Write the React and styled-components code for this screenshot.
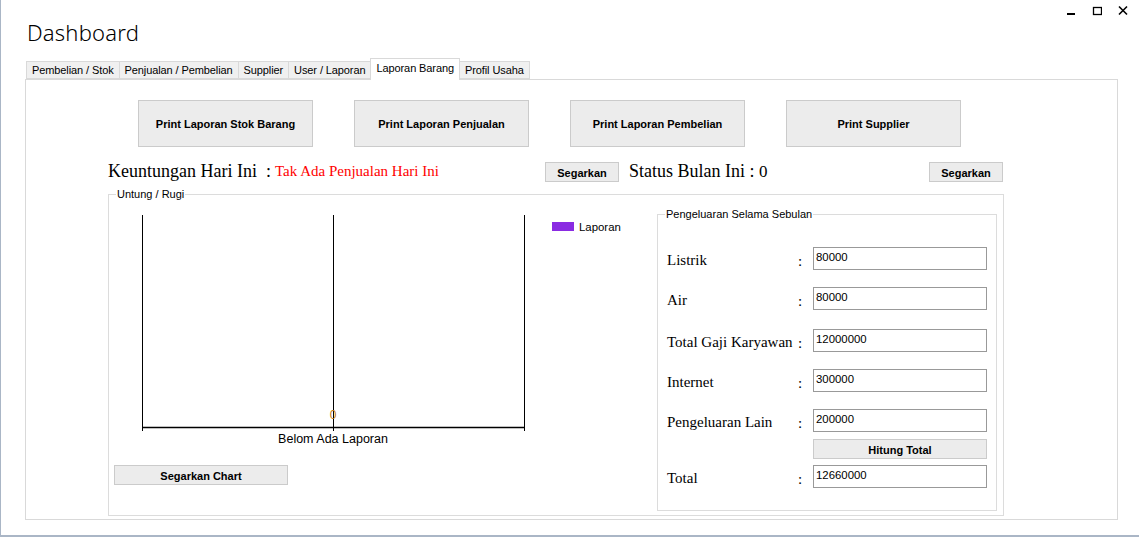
import styled, { createGlobalStyle } from "styled-components"

const Global = createGlobalStyle`
    html, body { margin: 0; padding: 0; background: #fff; }
    * { box-sizing: border-box; }
`

const Window = styled.div`
    width: 1139px;
    height: 537px;
    background: #fff;
    box-shadow: inset 1px 0 #aab6c6, inset 0 -2px #aab6c6;
    overflow: hidden;
    font-family: "Liberation Sans", Arial, sans-serif;
    color: #000;
`
const Header = styled.div`
    display: flex;
    justify-content: space-between;
    height: 58px;
`
const Title = styled.h1`
    margin: 16px 0 0 27px;
    font-family: "Noto Sans", sans-serif;
    font-weight: 300;
    font-size: 22px;
    line-height: 32px;
    letter-spacing: 0.2px;
`
const Controls = styled.div`
    display: flex;
    gap: 16px;
    margin: 5px 11px 0 0;
    height: 12px;
`
const Tabs = styled.div`
    display: flex;
    align-items: flex-end;
    height: 22px;
    margin-left: 27px;
    position: relative;
    z-index: 1;
    margin-bottom: -1px;
`
const Tab = styled.div`
    height: ${p => p.active ? "22px" : "18px"};
    padding: 0 5px;
    margin-bottom: ${p => p.active ? "0" : "1px"};
    background: ${p => p.active ? "#fff" : "#f0f0f0"};
    border: 1px solid #d9d9d9;
    border-bottom: ${p => p.active ? "none" : "1px solid #d9d9d9"};
    margin-left: -1px;
    font-size: 11px;
    letter-spacing: -0.1px;
    line-height: ${p => p.active ? "18px" : "16px"};
    white-space: nowrap;
`
const Panel = styled.div`
    margin-left: 25px;
    width: 1093px;
    height: 441px;
    border: 1px solid #d9d9d9;
    padding-top: 20px;
`
const PrintRow = styled.div`
    display: flex;
    gap: 41px;
    margin-left: 112px;
`
const Button = styled.button`
    width: ${p => p.w || 74}px;
    height: ${p => p.h || 20}px;
    background: #ececec;
    border: 1px solid #cbcbcb;
    font-family: "Liberation Sans", Arial, sans-serif;
    font-weight: bold;
    font-size: 11px;
    padding: 0;
    padding-top: ${p => p.h > 30 ? "0" : "2px"};
    color: #000;
`
const StatusRow = styled.div`
    display: flex;
    align-items: center;
    height: 21px;
    margin-top: 14px;
    margin-left: 82px;
`
const BigLabel = styled.span`
    font-family: "Liberation Serif", "Times New Roman", serif;
    font-size: ${p => p.size || 18}px;
    color: ${p => p.red ? "#ff0000" : "#000"};
    white-space: nowrap;
    margin-left: ${p => p.ml || 0}px;
    width: ${p => p.w ? p.w + "px" : "auto"};
`
const Group = styled.fieldset`
    margin: 0;
    padding: 0;
    border: 1px solid #dcdcdc;
    min-width: 0;
    legend {
        font-size: 11px;
        padding: 0 1px;
        margin-left: 7px;
        line-height: 12px;
        white-space: nowrap;
    }
`
const OuterGroup = styled(Group)`
    margin: 6px 0 0 82px;
    width: 896px;
    height: 328px;
    display: flex;
`
const LeftCol = styled.div`
    width: 548px;
    display: flex;
    flex-direction: column;
`
const ChartButtonWrap = styled.div`
    margin: 17px 0 0 5px;
`
const InnerGroup = styled(Group)`
    width: 340px;
    height: 303px;
    margin-top: 8px;
`
const FormRow = styled.div`
    display: flex;
    align-items: center;
    margin-top: ${p => p.top}px;
    margin-left: 9px;
    height: ${p => p.h || 23}px;
`
const RowLabel = styled.span`
    width: 131px;
    font-family: "Liberation Serif", "Times New Roman", serif;
    font-size: 15px;
    padding-top: 4px;
    white-space: nowrap;
`
const Colon = styled.span`
    width: 15px;
    font-family: "Liberation Serif", "Times New Roman", serif;
    font-size: 15px;
    padding-top: 6px;
`
const Field = styled.div`
    width: 174px;
    height: 23px;
    border: 1px solid #999;
    font-size: 11.4px;
    padding: 3px 0 0 2px;
`

const rows = [
    { label: "Listrik", value: "80000", top: 27 },
    { label: "Air", value: "80000", top: 17 },
    { label: "Total Gaji Karyawan", value: "12000000", top: 19 },
    { label: "Internet", value: "300000", top: 17 },
    { label: "Pengeluaran Lain", value: "200000", top: 17 },
]

const WinControls = () => (
    <Controls>
        <svg width="10" height="12" viewBox="0 0 10 12"><rect x="1" y="8" width="8" height="2" fill="#000" /></svg>
        <svg width="10" height="12" viewBox="0 0 10 12"><rect x="1.5" y="2.5" width="8" height="7" fill="none" stroke="#000" strokeWidth="1.3" /></svg>
        <svg width="10" height="12" viewBox="0 0 10 12"><path d="M1 1.5 L9 9.5 M9 1.5 L1 9.5" stroke="#000" strokeWidth="1.6" /></svg>
    </Controls>
)

const Chart = () => (
    <svg width="548" height="248" viewBox="0 0 548 248">
        <line x1="33.5" y1="15" x2="33.5" y2="231" stroke="#000" />
        <line x1="224.5" y1="15" x2="224.5" y2="231" stroke="#000" />
        <line x1="415.5" y1="15" x2="415.5" y2="231" stroke="#000" />
        <line x1="33" y1="227.5" x2="416" y2="227.5" stroke="#000" strokeWidth="1.6" />
        <text x="224" y="219" textAnchor="middle" fontSize="12" fill="#c47a10" fontFamily="Liberation Sans, Arial, sans-serif">0</text>
        <text x="224" y="243" textAnchor="middle" fontSize="12.5" fill="#000" fontFamily="Liberation Sans, Arial, sans-serif">Belom Ada Laporan</text>
        <rect x="443" y="22" width="22" height="9" fill="#8a2be2" />
        <text x="470" y="31" fontSize="11.4" fill="#000" fontFamily="Liberation Sans, Arial, sans-serif">Laporan</text>
    </svg>
)

const App = () => {
    return (
        <Window>
            <Global />
            <Header>
                <Title>Dashboard</Title>
                <WinControls />
            </Header>
            <Tabs>
                <Tab>Pembelian / Stok</Tab>
                <Tab>Penjualan / Pembelian</Tab>
                <Tab>Supplier</Tab>
                <Tab>User / Laporan</Tab>
                <Tab active>Laporan Barang</Tab>
                <Tab>Profil Usaha</Tab>
            </Tabs>
            <Panel>
                <PrintRow>
                    <Button w={175} h={47}>Print Laporan Stok Barang</Button>
                    <Button w={175} h={47}>Print Laporan Penjualan</Button>
                    <Button w={175} h={47}>Print Laporan Pembelian</Button>
                    <Button w={175} h={47}>Print Supplier</Button>
                </PrintRow>
                <StatusRow>
                    <BigLabel w={167}>Keuntungan Hari Ini&nbsp; :</BigLabel>
                    <BigLabel red size={15} w={270}>Tak Ada Penjualan Hari Ini</BigLabel>
                    <Button>Segarkan</Button>
                    <BigLabel ml={10} w={300}>Status Bulan Ini : <BigLabel size={17}>0</BigLabel></BigLabel>
                    <Button>Segarkan</Button>
                </StatusRow>
                <OuterGroup>
                    <legend>Untung / Rugi</legend>
                    <LeftCol>
                        <Chart />
                        <ChartButtonWrap>
                            <Button w={174}>Segarkan Chart</Button>
                        </ChartButtonWrap>
                    </LeftCol>
                    <InnerGroup>
                        <legend>Pengeluaran Selama Sebulan</legend>
                        {rows.map(r => (
                            <FormRow key={r.label} top={r.top}>
                                <RowLabel>{r.label}</RowLabel>
                                <Colon>:</Colon>
                                <Field>{r.value}</Field>
                            </FormRow>
                        ))}
                        <FormRow top={7} h={20}>
                            <RowLabel />
                            <Colon />
                            <Button w={174}>Hitung Total</Button>
                        </FormRow>
                        <FormRow top={6}>
                            <RowLabel>Total</RowLabel>
                            <Colon>:</Colon>
                            <Field>12660000</Field>
                        </FormRow>
                    </InnerGroup>
                </OuterGroup>
            </Panel>
        </Window>
    )
}

export default App
